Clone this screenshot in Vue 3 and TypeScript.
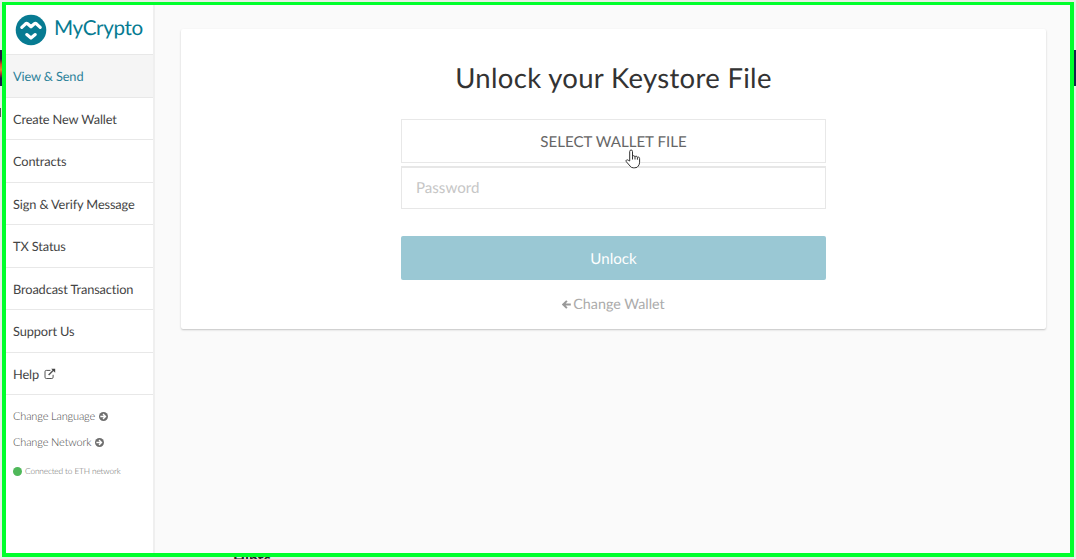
<script setup lang="ts">
interface NavItem {
  label: string
  active?: boolean
  external?: boolean
}

const navItems: NavItem[] = [
  { label: 'View & Send', active: true },
  { label: 'Create New Wallet' },
  { label: 'Contracts' },
  { label: 'Sign & Verify Message' },
  { label: 'TX Status' },
  { label: 'Broadcast Transaction' },
  { label: 'Support Us' },
  { label: 'Help', external: true },
]

const options: string[] = ['Change Language', 'Change Network']
</script>

<template>
  <div class="backdrop">
    <div class="strip strip-left"></div>
    <div class="glyph-edge"></div>
    <div class="strip strip-right"></div>
    <div class="behind-title">Hints</div>
    <div class="window">
      <aside class="sidebar">
        <div class="brand">
          <svg class="logo" viewBox="0 0 32 32">
            <circle cx="16" cy="16" r="15.3" fill="#077b92" />
            <path d="M6.8 13.4l3.8-3.6q1-.9 2 0l3.4 3 3.4-3q1-.9 2 0l3.8 3.6M11.8 20.6l4.2 3.4 4.2-3.4" fill="none" stroke="#fff" stroke-width="3.2" stroke-linecap="round" stroke-linejoin="round" />
          </svg>
          <span class="brand-name">MyCrypto</span>
        </div>
        <nav>
          <a v-for="item in navItems" :key="item.label" class="nav-item" :class="{ active: item.active }">
            <span>{{ item.label }}</span>
            <svg v-if="item.external" class="external" viewBox="0 0 12 12" fill="none" stroke="#555">
              <path d="M6.4 2.4H2.3Q1 2.4 1 3.7v5.5q0 1.3 1.3 1.3h5.5q1.3 0 1.3-1.3V6.8" />
              <path d="M4.6 7.1L9.6 2.1" stroke-width="1.4" />
              <path d="M7.2.8h4v4z" fill="#444" stroke="none" />
            </svg>
          </a>
        </nav>
        <div class="options">
          <a v-for="option in options" :key="option" class="option">
            <span>{{ option }}</span>
            <svg class="circle-arrow" viewBox="0 0 10 10">
              <circle cx="5" cy="5" r="5" fill="#6e6e6e" />
              <path d="M5 1.7L8.3 5 5 8.3 3.9 7.2 5.3 5.8H1.5V4.2h3.8L3.9 2.8z" fill="#fff" />
            </svg>
          </a>
        </div>
        <div class="status"><i class="dot"></i><span>Connected to ETH network</span></div>
      </aside>
      <main class="content">
        <section class="card">
          <h1>Unlock your Keystore File</h1>
          <form class="form" @submit.prevent>
            <button class="file" type="button">SELECT WALLET FILE</button>
            <input class="password" type="password" placeholder="Password" />
            <button class="unlock" type="submit">Unlock</button>
          </form>
          <a class="back">
            <svg class="back-arrow" viewBox="0 0 9 9" fill="none" stroke="#999" stroke-width="1.9">
              <path d="M8.8 4.5H1.5M4.9.8L1.2 4.5l3.7 3.7" />
            </svg>
            <span>Change Wallet</span>
          </a>
        </section>
      </main>
    </div>
    <svg class="pointer" viewBox="0 0 16 20">
      <path d="M4.7 12V2.6q0-1.6 1.4-1.6t1.4 1.6v5q.2-1 1.2-.9 1.1 0 1.3 1.2.3-.8 1.2-.7 1.1.1 1.2 1.3.4-.6 1.2-.4 1 .2 1 1.5v3.6q0 2.2-1.3 3.8-.9 1.8-3.5 1.8H8.3q-2 0-3.2-1.7L1.3 12.7q-.7-1.2.2-1.7.8-.5 1.8.3z" fill="#fff" stroke="#333" stroke-linejoin="round" />
      <path d="M7.5 7.5v3M10 8v2.5M12.4 8.7v2" fill="none" stroke="#333" />
    </svg>
  </div>
</template>

<style>
body {
  margin: 0;
  overflow: hidden;
}
</style>

<style scoped>
.backdrop {
  position: relative;
  box-sizing: border-box;
  width: 1076px;
  height: 559px;
  padding: 2px;
  overflow: hidden;
  background: #e6eee6;
  font-family: Lato, "Liberation Sans", sans-serif;
  text-rendering: geometricPrecision;
}
.strip {
  position: absolute;
  top: 50px;
  width: 2px;
  height: 36px;
  background: #17224a;
}
.strip-left {
  left: 0;
  background: linear-gradient(#25153d 25%, #d94a25 40%, #e7862b 55%, #a62835 68%, #1a1c48 78%);
}
.strip-right {
  right: 0;
}
.glyph-edge {
  position: absolute;
  left: 0;
  top: 108px;
  width: 1px;
  height: 9px;
  background: #555;
}
.behind-title {
  position: absolute;
  left: 233px;
  top: 551px;
  font: bold 15.8px/18px Lato, sans-serif;
  color: #222;
}
.window {
  position: relative;
  box-sizing: border-box;
  display: flex;
  width: 1072px;
  height: 555px;
  border: 4px solid #00ff2b;
  border-top-width: 3px;
  background: #fafafa;
}
.sidebar {
  box-sizing: border-box;
  width: 149px;
  flex: none;
  border-right: 2px solid #efefef;
  background: #fff;
}
.brand {
  display: flex;
  align-items: center;
  box-sizing: border-box;
  height: 49px;
  padding-left: 9px;
}
.logo {
  width: 32px;
  height: 32px;
}
.brand-name {
  margin: -3px 0 0 7px;
  font-size: 20.6px;
  line-height: 24px;
  letter-spacing: -0.35px;
  color: #077b92;
}
.nav-item {
  display: flex;
  align-items: center;
  box-sizing: border-box;
  height: 42.5px;
  padding: 1px 0 0 7px;
  border-top: 1px solid #e8e8e8;
  font-size: 12.8px;
  letter-spacing: -0.13px;
  color: #444;
  white-space: nowrap;
}
.nav-item.active {
  background: #f5f5f5;
  color: #2b8199;
}
.external {
  width: 12px;
  height: 12px;
  margin-left: 5px;
}
.options {
  padding-top: 9px;
  border-top: 1px solid #e8e8e8;
}
.option {
  display: flex;
  align-items: center;
  height: 25.5px;
  padding-left: 7px;
  font-size: 11px;
  font-weight: 300;
  letter-spacing: -0.15px;
  color: #444;
}
.circle-arrow {
  width: 9px;
  height: 9px;
  margin-left: 4px;
}
.status {
  display: flex;
  align-items: center;
  gap: 3px;
  margin: 11px 0 0 7px;
  font-size: 8.3px;
  font-weight: 300;
  line-height: 10px;
  letter-spacing: -0.14px;
  color: #666;
}
.dot {
  width: 9px;
  height: 9px;
  border-radius: 50%;
  background: #4fb85a;
}
.content {
  flex: 1;
  padding: 24px 24px 0 26px;
}
.card {
  display: flex;
  flex-direction: column;
  align-items: center;
  box-sizing: border-box;
  height: 300px;
  padding-top: 30px;
  border-radius: 2px;
  background: #fff;
  box-shadow: 0 1px 2px rgba(0, 0, 0, 0.22);
}
h1 {
  margin: 0;
  font-size: 27.5px;
  font-weight: 400;
  line-height: 38px;
  letter-spacing: 0.32px;
  color: #333;
  white-space: nowrap;
}
.form {
  display: flex;
  flex-direction: column;
  width: 425px;
  margin-top: 22px;
}
.file,
.password,
.unlock {
  box-sizing: border-box;
  margin: 0;
  font-family: inherit;
  font-size: 15.1px;
  text-rendering: inherit;
}
.file {
  height: 44px;
  padding: 2px 0 0;
  border: 1px solid #e8e8e8;
  background: #fff;
  color: #666;
}
.password {
  height: 43px;
  margin-top: 3px;
  padding: 0 14px;
  border: 1px solid #e7e7e7;
  border-top-width: 2px;
  background: #fff;
}
.password::placeholder {
  color: #c6c6c6;
}
.unlock {
  height: 44px;
  margin-top: 27px;
  padding: 2px 0 0;
  border: 0;
  border-radius: 2px;
  background: #9ac8d4;
  color: #fff;
}
.back {
  display: flex;
  align-items: center;
  gap: 2px;
  margin-top: 15px;
  font-size: 14.3px;
  line-height: 20px;
  color: #ababab;
}
.back-arrow {
  width: 9px;
  height: 9px;
  margin-top: -1px;
}
.pointer {
  position: absolute;
  left: 625px;
  top: 149px;
  width: 16px;
  height: 20px;
}
</style>
